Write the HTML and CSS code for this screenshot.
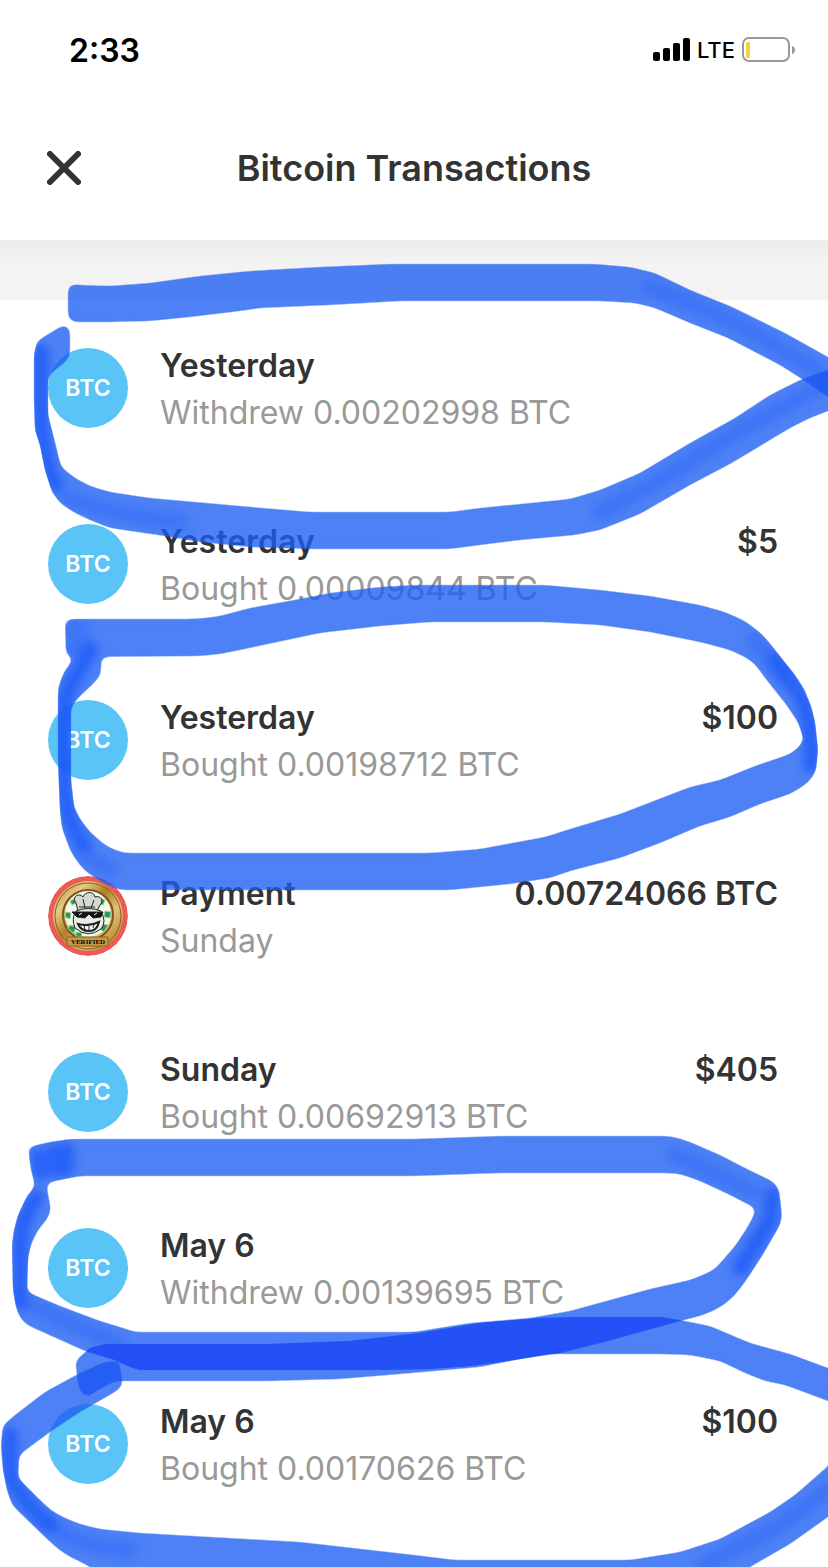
FILE: index.html
```html
<!DOCTYPE html>
<html lang="en">
<head>
  <meta charset="UTF-8" />
  <meta name="viewport" content="width=device-width, initial-scale=1" />
  <title>Bitcoin Transactions</title>
  <link rel="stylesheet" href="styles.css">
</head>
<body>
  <div class="screen">

    <div class="status-bar">
      <span class="time">2:33</span>
      <div class="status-right">
        <svg class="signal" width="38" height="24" viewBox="0 0 38 24" aria-label="Signal">
          <rect x="0" y="14" width="7" height="9" rx="2" />
          <rect x="10" y="10" width="7" height="13" rx="2" />
          <rect x="20" y="5" width="7" height="18" rx="2" />
          <rect x="30" y="0" width="7" height="23" rx="2" />
        </svg>
        <span class="network">LTE</span>
        <svg class="battery" width="54" height="26" viewBox="0 0 54 26" aria-label="Battery low">
          <rect x="2" y="1" width="46" height="23" rx="6" fill="none" stroke="#999" stroke-width="2" />
          <rect x="5" y="5" width="4" height="16" rx="1" fill="#f7ce46" />
          <path d="M51 9q3 1 3 4t-3 4z" fill="#999" />
        </svg>
      </div>
    </div>

    <header class="header">
      <button class="close" aria-label="Close">
        <svg width="34" height="34" viewBox="0 0 34 34">
          <path d="M3 3L31 31M31 3L3 31" fill="none" stroke="#333" stroke-width="6" stroke-linecap="round" />
        </svg>
      </button>
      <h1>Bitcoin Transactions</h1>
    </header>
    <div class="divider"></div>

    <ul class="transactions">
      <li class="row">
        <span class="avatar">BTC</span>
        <div class="info">
          <div class="line"><h2>Yesterday</h2></div>
          <p>Withdrew 0.00202998 BTC</p>
        </div>
      </li>
      <li class="row">
        <span class="avatar">BTC</span>
        <div class="info">
          <div class="line"><h2>Yesterday</h2><span class="amount">$5</span></div>
          <p>Bought 0.00009844 BTC</p>
        </div>
      </li>
      <li class="row">
        <span class="avatar">BTC</span>
        <div class="info">
          <div class="line"><h2>Yesterday</h2><span class="amount">$100</span></div>
          <p>Bought 0.00198712 BTC</p>
        </div>
      </li>
      <li class="row">
        <svg class="photo" viewBox="0 0 80 80" aria-label="Payment">
          <defs>
            <linearGradient id="gold" x1="0" y1="0" x2="1" y2="1">
              <stop offset="0" stop-color="#a87920" />
              <stop offset=".25" stop-color="#e6c987" />
              <stop offset=".45" stop-color="#b07f2a" />
              <stop offset=".65" stop-color="#e2c078" />
              <stop offset="1" stop-color="#a06f18" />
            </linearGradient>
          </defs>
          <circle cx="40" cy="40" r="40" fill="#eb5a55" />
          <circle cx="40" cy="40" r="35" fill="url(#gold)" />
          <circle cx="40" cy="40" r="33" fill="none" stroke="#8b6218" stroke-width="1" />
          <circle cx="40" cy="39" r="25" fill="#d9b564" stroke="#7c5716" stroke-width="2" />
          <circle cx="40" cy="38" r="23" fill="#f1faec" />
          <!-- banknotes -->
          <g fill="#279a4e" stroke="#9ad0a5" stroke-width="1">
            <path d="M22 25l6-3 2 4-6 3z" />
            <path d="M51 22l6 2-2 5-6-2z" />
            <path d="M18 36l5 1-1 6-5-2z" />
            <path d="M57 35l6 1-1 6-6-1z" />
            <path d="M22 49l6 2-2 6-6-4z" />
            <path d="M54 48l6 1-4 7-4-3z" />
            <path d="M28 56l6 1-1 4-5-1z" />
          </g>
          <g stroke="#222" stroke-width="1">
            <path d="M30 35l-2-8c-5-6 3-11 7-6 2-6 11-6 12 0 6-2 9 4 5 8l-3 6z" fill="#d3dad2" />
            <path d="M35 23l2 9M46 24l-3 8M31 31h16" fill="none" />
            <path d="M28 35q12-5 25 0 6 11 0 18-13 10-26-1-4-9 1-17z" fill="#e8ede5" />
            <path d="M24 36l31 0-2 5-8 1-4-4-4 4-8-1z" fill="#111" />
            <path d="M31 39l3-2M46 39l3-2" stroke="#fff" />
            <path d="M30 48q11 3 21-2-2 9-10 9-8 0-11-7z" fill="#fff" stroke-width="2" />
            <path d="M36 50l1 4M41 50v4M46 48l-1 4" fill="none" />
          </g>
          <path d="M19 61h41v9H19z" fill="#c79a48" stroke="#8b6218" stroke-width="1" />
          <text x="40" y="68" text-anchor="middle" class="badge-text">VERIFIED</text>
        </svg>
        <div class="info">
          <div class="line"><h2>Payment</h2><span class="amount">0.00724066 BTC</span></div>
          <p>Sunday</p>
        </div>
      </li>
      <li class="row">
        <span class="avatar">BTC</span>
        <div class="info">
          <div class="line"><h2>Sunday</h2><span class="amount">$405</span></div>
          <p>Bought 0.00692913 BTC</p>
        </div>
      </li>
      <li class="row">
        <span class="avatar">BTC</span>
        <div class="info">
          <div class="line"><h2>May 6</h2></div>
          <p>Withdrew 0.00139695 BTC</p>
        </div>
      </li>
      <li class="row">
        <span class="avatar">BTC</span>
        <div class="info">
          <div class="line"><h2>May 6</h2><span class="amount">$100</span></div>
          <p>Bought 0.00170626 BTC</p>
        </div>
      </li>
    </ul>

    <!-- marker circles over the list -->
    <svg class="marker" viewBox="0 0 828 1567" aria-hidden="true">
      <defs>
        <!-- rounds off the corners of the strokes -->
        <filter id="round" color-interpolation-filters="sRGB">
          <feGaussianBlur stdDeviation="4" />
          <feComponentTransfer><feFuncA type="linear" slope="8" intercept="-3.5" /></feComponentTransfer>
        </filter>
        <filter id="shade" filterUnits="userSpaceOnUse" x="-20" y="0" width="880" height="1600" color-interpolation-filters="sRGB">
          <feGaussianBlur stdDeviation="4" />
        </filter>
        <path id="s1" d="M68 284L80 285 110 286 150 283 200 276 250 271 320 267 390 264H595L630 267 655 273 690 290 730 306 785 333 828 357 850 370V412L828 397 805 381 780 365 728 338 690 323 655 308 635 303 600 301H400L330 305 260 308 240 311 190 317 150 321 110 322 72 322 68 319Z" />
        <path id="s2" d="M65 324L70 328V357L62 365 52 372 48 378V415L55 442 61 467 75 478 90 486 110 492 150 498 240 506 310 512H450L480 508 570 499 600 490 640 473 690 443 735 418 770 395 800 380 828 370 850 362V402L828 411 810 418 790 428 730 464 690 485 640 514 600 530 575 535 520 540 480 545 450 549H310L250 547 200 542 165 536 110 528 90 520 75 513 60 503 52 492 45 470 40 445 35 430 34 400V355L37 341Z" />
        <path id="s3" d="M65 620L70 619H190L205 618 220 616 250 608 300 599 330 593 380 587 414 585H545L600 590 650 596 700 605 725 612 745 621 762 634 772 646 783 660 795 675 804 689 811 706 815 722 818 750 816 770 812 778 805 785 790 794 760 804 730 817 700 826 660 843 620 858 570 871 550 878 510 884 450 890H120L105 884 85 871 76 860 70 850 62 828 60 810 58 760V690L60 682 64 672 75 657 101 655V675L94 683 76 700 71 708V780L74 807 80 819 90 832 105 845 115 850 125 853H430L480 849 545 837 570 829 620 814 690 787 720 780 755 766 790 754 798 748 804 740 798 722 785 703 765 678 755 664 745 657 730 650 700 642 650 632 600 625 545 622H430L380 626 320 633 240 650 220 654 200 656 70 657 66 654Z" />
        <path id="s4" d="M28 1147L50 1142 70 1139H414L500 1136H668L678 1138 690 1142 720 1155 745 1168 774 1182 779 1190 782 1216 780 1225 762 1256 745 1282 735 1295 725 1304 713 1311 700 1316 680 1321 640 1332 600 1343 560 1353 500 1362 470 1366 430 1369 380 1370H140L130 1367 115 1360 85 1351 27 1325 20 1318 16 1307 13 1290 12 1245 14 1230 18 1215 27 1196 38 1183 46 1183 51 1210 48 1218 38 1230 31 1244 28 1258 27 1292 60 1306 100 1321 120 1327 135 1332H414L470 1323 530 1318 570 1311 610 1300 650 1289 690 1280 705 1274 715 1269 735 1246 747 1228 757 1209 730 1195 700 1181 680 1174 668 1173H500L414 1176H80L35 1185 31 1170Z" />
        <path id="s5" d="M75 1361L90 1348 105 1344H270L350 1341 420 1333 480 1323 540 1318 580 1317H660L685 1321 710 1326 750 1343 790 1354 828 1368 850 1376V1410L828 1401 785 1385 765 1381 745 1373 720 1361 690 1355 660 1354H550L520 1359 480 1367 400 1374 340 1379 270 1381H115L98 1390 89 1396 83 1395 79 1388Z" />
        <path id="s6" d="M119 1361L123 1386 115 1392 80 1412 50 1432 19 1455 18 1478 40 1500 52 1511 65 1518 80 1524 100 1529 140 1533 300 1542 414 1555 455 1560H630L680 1552 720 1539 770 1512 795 1495 828 1466 850 1440V1500L828 1517 790 1544 750 1567 730 1580H110L85 1564 70 1557 58 1549 45 1537 12 1505 7 1490 3 1470 1 1445 3 1425 15 1415 45 1392 78 1374 105 1362Z" />
        <clipPath id="c1"><use href="#s1" /></clipPath>
        <clipPath id="c2"><use href="#s2" /></clipPath>
        <clipPath id="c3"><use href="#s3" /></clipPath>
        <clipPath id="c4"><use href="#s4" /></clipPath>
        <clipPath id="c6"><use href="#s6" /></clipPath>
      </defs>

      <g class="ink">
        <use href="#s1" filter="url(#round)" />
        <use href="#s2" filter="url(#round)" />
        <use href="#s3" filter="url(#round)" />
        <use href="#s4" filter="url(#round)" />
        <use href="#s5" filter="url(#round)" />
        <use href="#s6" filter="url(#round)" />
      </g>

      <!-- darker where the marker runs downwards -->
      <g clip-path="url(#c2)">
        <path class="deep" filter="url(#shade)" d="M41 352V425Q46 470 56 485" />
        <path class="light" filter="url(#shade)" d="M68 498Q110 515 180 522M600 512L660 480 740 430 815 390" />
      </g>
      <g clip-path="url(#c1)">
        <path class="light" filter="url(#shade)" d="M650 287L740 325 820 372" />
      </g>
      <g clip-path="url(#c3)">
        <path class="light" filter="url(#shade)" d="M70 628H78V648H70M82 630V648M755 640L785 678M85 855L110 870" />
        <path class="deep" filter="url(#shade)" d="M90 650L68 690 64 705V790Q68 825 84 845" />
        <path class="deep" filter="url(#shade)" d="M775 660L795 687Q814 715 811 765" />
      </g>
      <g clip-path="url(#c4)">
        <path class="deep" filter="url(#shade)" d="M38 1156L42 1172M54 1152L58 1170M66 1150V1168" />
        <path class="deep" filter="url(#shade)" d="M36 1198Q19 1220 20 1255V1302" />
        <path class="deep" filter="url(#shade)" d="M772 1195L770 1220 740 1268" />
        <path class="light" filter="url(#shade)" d="M675 1155L755 1192M30 1305L120 1345" />
      </g>
      <g clip-path="url(#c6)">
        <path class="deep" filter="url(#shade)" d="M10 1435V1475Q20 1500 50 1525" />
        <path class="light" filter="url(#shade)" d="M50 1525Q80 1548 130 1550M705 1565L780 1525 828 1490" />
      </g>

      <use class="cross" href="#s2" clip-path="url(#c1)" />
      <use class="overlap" href="#s5" clip-path="url(#c4)" />
      <use class="cross" href="#s5" clip-path="url(#c6)" />
    </svg>

  </div>
</body>
</html>
```

FILE: styles.css
```css
* { margin: 0; padding: 0; box-sizing: border-box; }
body {
  font-family: Inter, "Liberation Sans", sans-serif;
  background: #fff;
  color: #333;
}
.screen {
  position: relative;
  min-height: 100vh;
  overflow: hidden;
}
.status-bar {
  display: flex;
  justify-content: space-between;
  align-items: center;
  height: 100px;
  padding: 0 33px 0 69px;
  color: #000;
}
.time {
  font-size: 32px;
  font-weight: 600;
}
.status-right {
  display: flex;
  align-items: center;
  gap: 6px;
}
.network {
  font-size: 22px;
  font-weight: 500;
}
.header {
  display: grid;
  grid-template-columns: 34px 1fr 34px;
  align-items: center;
  height: 140px;
  padding: 0 47px 4px;
}
.close {
  width: 34px;
  height: 34px;
  border: none;
  background: none;
  cursor: pointer;
}
.close svg { display: block; }
h1 {
  font-size: 36px;
  font-weight: 600;
  text-align: center;
}
.divider {
  height: 60px;
  background: linear-gradient(#ebebeb, #f3f3f3 20px);
}
.transactions { list-style: none; }
.row {
  display: flex;
  align-items: center;
  gap: 32px;
  min-height: 176px;
  padding: 0 50px 0 48px;
}
.avatar, .photo {
  flex: none;
  width: 80px;
  height: 80px;
  border-radius: 50%;
}
.avatar {
  display: flex;
  align-items: center;
  justify-content: center;
  background: #5ac4f6;
  color: #fff;
  font-size: 23px;
  font-weight: 600;
}
.badge-text {
  font-size: 7px;
  font-weight: 700;
  font-family: "Liberation Serif", serif;
}
.info {
  flex: 1;
  padding-top: 2px;
}
.line {
  display: flex;
  justify-content: space-between;
}
h2, .amount, .info p {
  font-size: 32px;
  line-height: 47px;
}
h2, .amount { font-weight: 600; }
.info p { color: #999; }
.marker {
  position: absolute;
  top: 0;
  left: 0;
  width: 100%;
  pointer-events: none;
}
.ink { fill: #1c5ef3; }
.ink use { opacity: 0.78; }
.deep, .light {
  fill: none;
  stroke: #1f5bf8;
  stroke-width: 16px;
  stroke-opacity: 0.8;
  stroke-linecap: round;
  stroke-linejoin: round;
}
.light { stroke-opacity: 0.3; }
.overlap { fill: #2451f5; }
.cross {
  fill: #2458f3;
  fill-opacity: 0.5;
}
```
